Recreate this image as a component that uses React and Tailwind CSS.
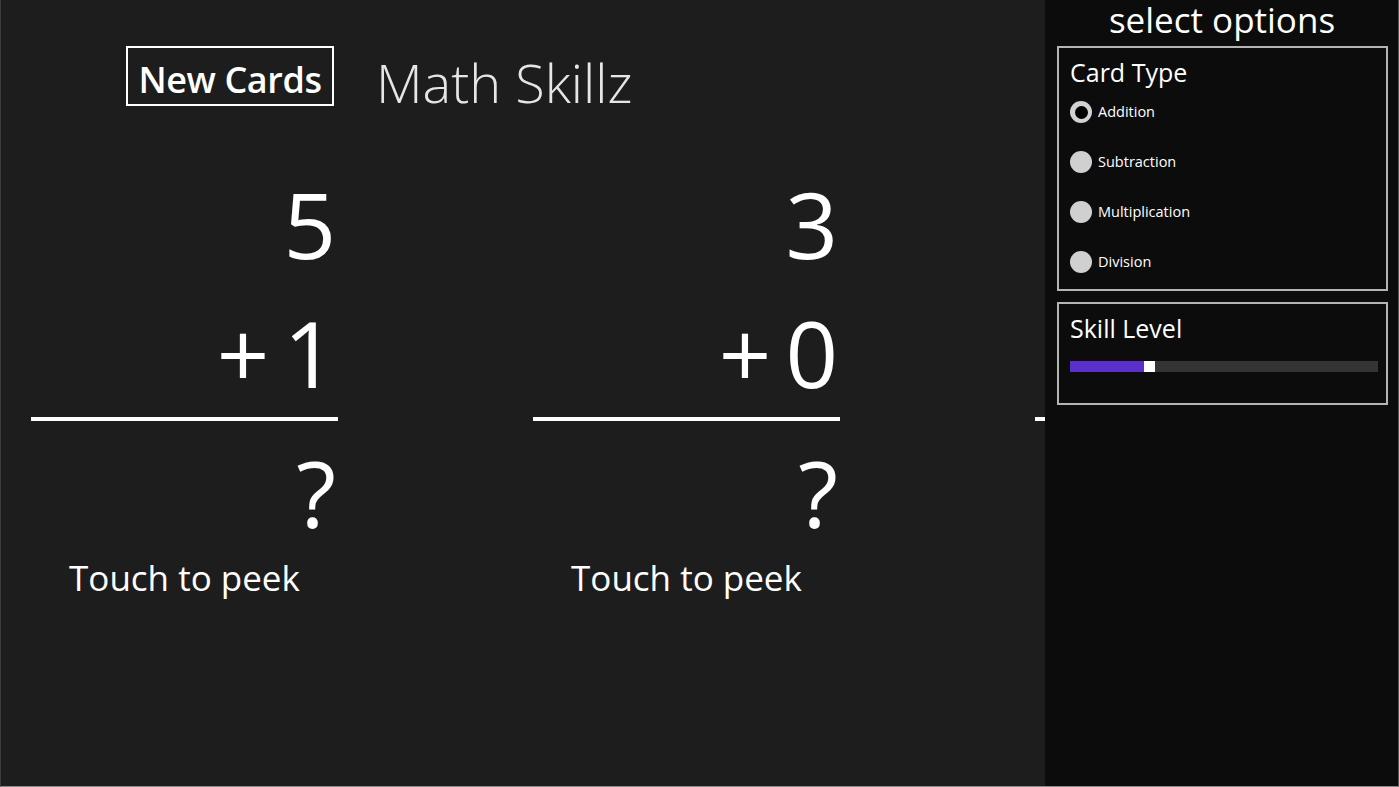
import React from "react";

const cards = [
  { top: "5", op: "+", bottom: "1" },
  { top: "3", op: "+", bottom: "0" },
  { top: "", op: "", bottom: "" },
];

const cardTypes = [
  { label: "Addition", checked: true },
  { label: "Subtraction", checked: false },
  { label: "Multiplication", checked: false },
  { label: "Division", checked: false },
];

function FlashCard({ top, op, bottom }) {
  const blank = !top;
  return (
    <div className="w-[307px] shrink-0 flex flex-col text-white">
      <div className="h-[96px] text-[92px] leading-[96px] text-right pr-[2px]">{top}</div>
      <div className="mt-[33px] h-[96px] flex justify-end items-start text-[92px] leading-[96px] pr-[2px]">
        <span>{op}</span>
        <span className="ml-[14px]">{bottom}</span>
      </div>
      <div className="mt-[16px] h-[4px] bg-white" />
      <div className="mt-[24px] h-[96px] text-[92px] leading-[96px] text-right pr-[2px]">{blank ? "" : "?"}</div>
      <div className="mt-[19px] h-[35px] text-[35px] leading-none text-center whitespace-nowrap">
        {blank ? "" : "Touch to peek"}
      </div>
    </div>
  );
}

function Radio({ label, checked }) {
  return (
    <div className="h-[22px] flex items-center">
      {checked ? (
        <div className="w-[22px] h-[22px] rounded-full bg-[#d2d2d2] flex items-center justify-center">
          <div className="w-[13px] h-[13px] rounded-full bg-black" />
        </div>
      ) : (
        <div className="w-[22px] h-[22px] rounded-full bg-[#d0d0d0]" />
      )}
      <span className="ml-[6px] text-[14.5px] leading-none text-white">{label}</span>
    </div>
  );
}

export default function App() {
  return (
    <div className="w-[1399px] h-[787px] flex bg-[#1d1d1d] font-['Open_Sans','Noto_Sans',sans-serif] border-l border-l-[#3c3c3c] border-r border-r-[#555555] border-b border-b-[#8a8a8a] overflow-hidden">
      {/* main flash card area */}
      <div className="w-[1044px] shrink-0 h-full overflow-hidden flex flex-col">
        <div className="pt-[46px] pl-[125px] flex items-start">
          <button className="w-[208px] h-[60px] border-2 border-white text-white text-[36px] font-semibold leading-none pt-[8px] tracking-[-0.4px]">
            New Cards
          </button>
          <div className="ml-[42px] mt-[9px] text-[54px] font-light leading-none text-[#e6e6e6]">
            Math Skillz
          </div>
        </div>
        <div className="mt-[67px] pl-[30px] flex gap-[195px]">
          {cards.map((c, i) => (
            <FlashCard key={i} {...c} />
          ))}
        </div>
      </div>

      {/* options panel */}
      <div className="w-[354px] shrink-0 h-full bg-[#0c0c0c] flex flex-col">
        <div className="pt-[2px] h-[37px] text-[35px] leading-none text-white text-center">select options</div>
        <div className="mt-[9px] ml-[12px] w-[331px] border-2 border-[#b4b4b4] pt-[12px] pb-[16px] pl-[11px]">
          <div className="h-[25px] text-[25px] leading-none text-white">Card Type</div>
          <div className="mt-[16px] flex flex-col gap-[28px]">
            {cardTypes.map((r) => (
              <Radio key={r.label} {...r} />
            ))}
          </div>
        </div>
        <div className="mt-[11px] ml-[12px] w-[331px] border-2 border-[#b4b4b4] pt-[12px] pb-[31px] pl-[11px]">
          <div className="h-[25px] text-[25px] leading-none text-white">Skill Level</div>
          <div className="mt-[20px] w-[308px] h-[11px] bg-[#343434] flex">
            <div className="w-[74px] h-full bg-[#5b2fc9]" />
            <div className="w-[11px] h-full bg-white" />
          </div>
        </div>
      </div>
    </div>
  );
}
